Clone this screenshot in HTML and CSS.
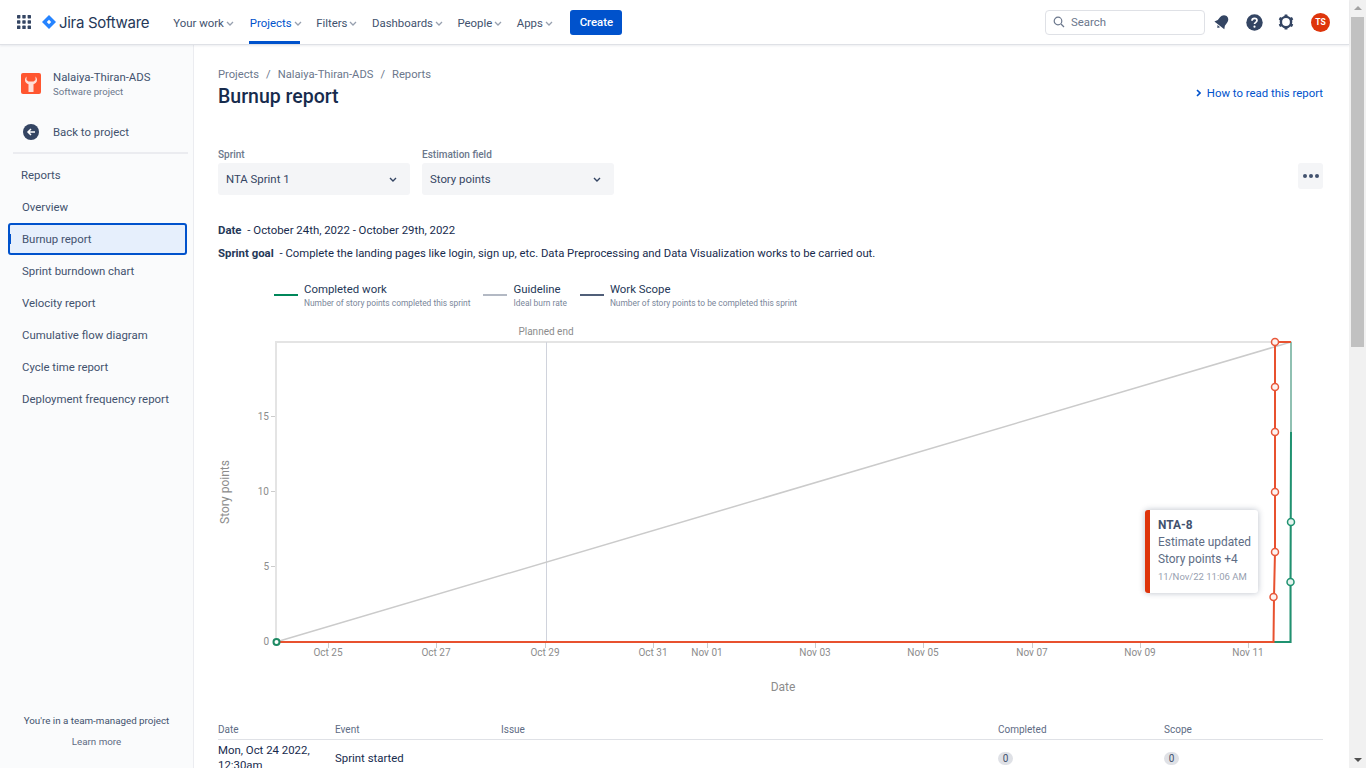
FILE: index.html
```html
<!DOCTYPE html>
<html lang="en">

<head>
    <meta charset="UTF-8">
    <meta name="viewport" content="width=device-width, initial-scale=1.0">
    <title>Burnup report</title>
    <link rel="stylesheet" href="styles.css">
</head>

<body>
    <div class="app">
        <div class="page">
            <header class="topbar">
                <svg class="apps" width="14" height="14" viewBox="0 0 14 14">
                    <g fill="#344563">
                        <rect x="0" y="0" width="3.4" height="3.4" rx=".6" /><rect x="5.3" y="0" width="3.4" height="3.4" rx=".6" /><rect x="10.6" y="0" width="3.4" height="3.4" rx=".6" />
                        <rect x="0" y="5.3" width="3.4" height="3.4" rx=".6" /><rect x="5.3" y="5.3" width="3.4" height="3.4" rx=".6" /><rect x="10.6" y="5.3" width="3.4" height="3.4" rx=".6" />
                        <rect x="0" y="10.6" width="3.4" height="3.4" rx=".6" /><rect x="5.3" y="10.6" width="3.4" height="3.4" rx=".6" /><rect x="10.6" y="10.6" width="3.4" height="3.4" rx=".6" />
                    </g>
                </svg>
                <div class="logo">
                    <svg width="14" height="14" viewBox="0 0 14 14">
                        <path d="M7 0 14 7 7 14 0 7Z" fill="#2684ff" />
                        <path d="M7 4.8 9.2 7 7 9.2 4.8 7Z" fill="#fff" />
                    </svg>
                    <span>Jira Software</span>
                </div>
                <nav class="nav">
                    <a class="nav-item" href="#">Your work <svg class="caret" viewBox="0 0 8 5"><path d="M1 1l3 3 3-3" /></svg></a>
                    <a class="nav-item active" href="#">Projects <svg class="caret" viewBox="0 0 8 5"><path d="M1 1l3 3 3-3" /></svg></a>
                    <a class="nav-item" href="#">Filters <svg class="caret" viewBox="0 0 8 5"><path d="M1 1l3 3 3-3" /></svg></a>
                    <a class="nav-item" href="#">Dashboards <svg class="caret" viewBox="0 0 8 5"><path d="M1 1l3 3 3-3" /></svg></a>
                    <a class="nav-item" href="#">People <svg class="caret" viewBox="0 0 8 5"><path d="M1 1l3 3 3-3" /></svg></a>
                    <a class="nav-item" href="#">Apps <svg class="caret" viewBox="0 0 8 5"><path d="M1 1l3 3 3-3" /></svg></a>
                </nav>
                <a class="create" href="#">Create</a>
                <div class="search">
                    <svg width="12" height="12" viewBox="0 0 12 12" fill="none" stroke="#6b778c" stroke-width="1.2">
                        <circle cx="5" cy="5" r="3.8" />
                        <path d="M8 8l3 3" />
                    </svg>
                    <span>Search</span>
                </div>
                <div class="top-icons">
                    <svg width="16" height="16" viewBox="0 0 16 16">
                        <g fill="#344563" transform="rotate(38 8 8)">
                            <path d="M8 .5C5.200.5 3.500 2.800 3.500 5.500v3.600L1.700 12.300h12.600l-1.800-3.200V5.500C12.500 2.800 10.800.5 8 .5z" />
                            <path d="M6.300 13.200h3.400L8 15.500z" />
                        </g>
                    </svg>
                    <svg width="17" height="17" viewBox="0 0 17 17">
                        <circle cx="8.500" cy="8.500" r="8.200" fill="#344563" />
                        <path d="M6 6.700c0-1.500 1.100-2.400 2.500-2.400s2.500.9 2.500 2.200c0 1.900-2.500 1.800-2.500 3.600" fill="none" stroke="#fff" stroke-width="1.700" />
                        <circle cx="8.500" cy="12.700" r="1.100" fill="#fff" />
                    </svg>
                    <svg width="16" height="16" viewBox="0 0 16 16">
                        <circle cx="8" cy="8" r="5.100" fill="none" stroke="#344563" stroke-width="2.400" />
                        <g fill="#344563">
                            <rect x="6.500" y="0.400" width="3" height="2.600" rx=".5" />
                            <rect x="6.500" y="13" width="3" height="2.600" rx=".5" />
                            <rect x="6.500" y="0.400" width="3" height="2.600" rx=".5" transform="rotate(60 8 8)" />
                            <rect x="6.500" y="0.400" width="3" height="2.600" rx=".5" transform="rotate(120 8 8)" />
                            <rect x="6.500" y="0.400" width="3" height="2.600" rx=".5" transform="rotate(240 8 8)" />
                            <rect x="6.500" y="0.400" width="3" height="2.600" rx=".5" transform="rotate(300 8 8)" />
                        </g>
                    </svg>
                    <span class="avatar">TS</span>
                </div>
            </header>

            <div class="layout">
                <aside class="sidebar">
                    <div class="project">
                        <svg class="project-icon" width="20" height="21" viewBox="0 0 20 21">
                            <rect width="20" height="21" rx="2" fill="#ff5630" />
                            <path d="M5.500 3.500C4.500 4.500 4 5.800 4 7c0 2 1.200 3.400 3.500 4.200V19h5v-7.800C14.800 10.400 16 9 16 7c0-1.200-.5-2.500-1.500-3.500V7l-2 1.500h-5L5.500 7z" fill="#fff" opacity=".82" />
                        </svg>
                        <div>
                            <div class="project-name">Nalaiya-Thiran-ADS</div>
                            <div class="project-type">Software project</div>
                        </div>
                    </div>
                    <a class="back" href="#">
                        <svg width="16" height="16" viewBox="0 0 16 16">
                            <circle cx="8" cy="8" r="8" fill="#344563" />
                            <path d="M12 8H5M8 5 5 8l3 3" fill="none" stroke="#fff" stroke-width="1.500" />
                        </svg>
                        Back to project
                    </a>
                    <div class="side-title">Reports</div>
                    <ul class="side-list">
                        <li>Overview</li>
                        <li class="current">Burnup report</li>
                        <li>Sprint burndown chart</li>
                        <li>Velocity report</li>
                        <li>Cumulative flow diagram</li>
                        <li>Cycle time report</li>
                        <li>Deployment frequency report</li>
                    </ul>
                    <div class="side-foot">
                        <p>You're in a team-managed project</p>
                        <p>Learn more</p>
                    </div>
                </aside>

                <main class="main">
                    <div class="crumbs">
                        <span>Projects</span><i>/</i><span>Nalaiya-Thiran-ADS</span><i>/</i><span>Reports</span>
                    </div>
                    <div class="head-row">
                        <h1>Burnup report</h1>
                        <a class="howto" href="#">
                            <svg width="5" height="8" viewBox="0 0 5 8"><path d="M1 1l3 3-3 3" fill="none" stroke="#0052cc" stroke-width="1.600" /></svg>
                            How to read this report
                        </a>
                    </div>

                    <div class="filters">
                        <div class="field">
                            <label>Sprint</label>
                            <div class="select">NTA Sprint 1 <svg viewBox="0 0 8 5"><path d="M1 1l3 3 3-3" /></svg></div>
                        </div>
                        <div class="field">
                            <label>Estimation field</label>
                            <div class="select">Story points <svg viewBox="0 0 8 5"><path d="M1 1l3 3 3-3" /></svg></div>
                        </div>
                        <button class="more"><b></b><b></b><b></b></button>
                    </div>

                    <p class="info date"><strong>Date</strong> - October 24th, 2022 - October 29th, 2022</p>
                    <p class="info goal"><strong>Sprint goal</strong> - Complete the landing pages like login, sign up, etc. Data Preprocessing and Data Visualization works to be carried out.</p>

                    <div class="legend">
                        <div class="legend-item">
                            <span class="swatch green"></span>
                            <div><div class="legend-name">Completed work</div><div class="legend-desc">Number of story points completed this sprint</div></div>
                        </div>
                        <div class="legend-item">
                            <span class="swatch grey"></span>
                            <div><div class="legend-name">Guideline</div><div class="legend-desc">Ideal burn rate</div></div>
                        </div>
                        <div class="legend-item">
                            <span class="swatch navy"></span>
                            <div><div class="legend-name">Work Scope</div><div class="legend-desc">Number of story points to be completed this sprint</div></div>
                        </div>
                    </div>

                    <div class="chart">
                        <svg class="plot" width="1105" height="385" viewBox="218 322 1105 385">
                            <rect x="276" y="342" width="1015" height="300" fill="none" stroke="#e4e4e4" stroke-width="2" />
                            <path d="M546.500 342V642" stroke="#d0d3dc" fill="none" />
                            <text class="axis" x="546" y="335" text-anchor="middle">Planned end</text>

                            <g stroke="#ccc" fill="none">
                                <path d="M271 416.500h4M271 491.500h4M271 566.500h4" />
                                <path d="M328.500 643v5M436.500 643v5M545.500 643v5M653.500 643v5M707.500 643v5M815.500 643v5M923.500 643v5M1032.500 643v5M1140.500 643v5M1248.500 643v5" />
                            </g>
                            <g class="axis" text-anchor="end">
                                <text x="269" y="645">0</text>
                                <text x="269" y="570">5</text>
                                <text x="269" y="495">10</text>
                                <text x="269" y="420">15</text>
                            </g>
                            <g class="axis" text-anchor="middle">
                                <text x="328" y="656">Oct 25</text>
                                <text x="436" y="656">Oct 27</text>
                                <text x="545" y="656">Oct 29</text>
                                <text x="653" y="656">Oct 31</text>
                                <text x="707" y="656">Nov 01</text>
                                <text x="815" y="656">Nov 03</text>
                                <text x="923" y="656">Nov 05</text>
                                <text x="1032" y="656">Nov 07</text>
                                <text x="1140" y="656">Nov 09</text>
                                <text x="1248" y="656">Nov 11</text>
                            </g>
                            <text class="axis title" x="783" y="691" text-anchor="middle">Date</text>
                            <text class="axis title" x="229" y="492" text-anchor="middle" transform="rotate(-90 229 492)">Story points</text>

                            <path d="M276 642 1291 342" stroke="#cbcbcb" stroke-width="1.500" fill="none" />
                            <path d="M1291 342V432" stroke="#3d9d80" stroke-width="1" fill="none" />
                            <path d="M1273 642H1290.500V582L1291 432" stroke="#1f9270" stroke-width="2" fill="none" />
                            <path d="M276 642H1273.500L1274 597 1275 552V342H1291" stroke="#e8512f" stroke-width="2" fill="none" />

                            <g fill="#fdf3f0" stroke="#e8583a" stroke-width="1.500">
                                <circle cx="1273.500" cy="597" r="3.500" />
                                <circle cx="1275" cy="552" r="3.500" />
                                <circle cx="1275" cy="492" r="3.500" />
                                <circle cx="1275" cy="432" r="3.500" />
                                <circle cx="1275" cy="387" r="3.500" />
                                <circle cx="1275" cy="342" r="3.500" />
                            </g>
                            <g fill="#e6f4ef" stroke="#1f9270" stroke-width="1.500">
                                <circle cx="1290.500" cy="582" r="3.500" />
                                <circle cx="1291" cy="522" r="3.500" />
                            </g>
                            <circle cx="276.500" cy="642" r="3" fill="#fff" stroke="#1f8a64" stroke-width="2" />
                        </svg>
                        <div class="tip">
                            <div class="tip-key">NTA-8</div>
                            <div>Estimate updated</div>
                            <div>Story points +4</div>
                            <div class="tip-time">11/Nov/22 11:06 AM</div>
                        </div>
                    </div>

                    <div class="table">
                        <div class="row thead">
                            <span class="c-date">Date</span><span class="c-event">Event</span><span class="c-issue">Issue</span><span class="c-done">Completed</span><span>Scope</span>
                        </div>
                        <div class="row">
                            <span class="c-date">Mon, Oct 24 2022, 12:30am</span><span class="c-event">Sprint started</span><span class="c-issue"></span><span class="c-done"><em>0</em></span><span><em>0</em></span>
                        </div>
                    </div>
                </main>
            </div>
        </div>

        <div class="scrollbar">
            <div class="arrow up"></div>
            <div class="thumb"></div>
            <div class="arrow down"></div>
        </div>
    </div>
</body>

</html>
```

FILE: styles.css
```css
* {
    box-sizing: border-box;
    padding: 0;
    margin: 0;
    list-style: none;
}

a {
    text-decoration: none;
    color: inherit;
}

body {
    font-family: "Roboto", "Liberation Sans", sans-serif;
    font-size: 11.4px;
    color: #172b4d;
    background: #fff;
}

.app {
    display: flex;
    height: 768px;
    overflow: hidden;
}

.page {
    flex: 1;
    min-width: 0;
    display: flex;
    flex-direction: column;
}

/* top bar */
.topbar {
    position: relative;
    z-index: 2;
    flex: none;
    display: flex;
    align-items: center;
    height: 45px;
    padding-left: 17px;
    background: #fff;
    border-bottom: 1px solid #dfe1e6;
    box-shadow: 0 1px 2px rgba(9, 30, 66, .08);
}

.logo {
    display: flex;
    align-items: center;
    gap: 3px;
    margin-left: 11px;
    font-family: "Inter", "Roboto", sans-serif;
    font-size: 15px;
    letter-spacing: -.3px;
    color: #253858;
}

.nav {
    display: flex;
    align-self: stretch;
    margin-left: 20px;
}

.nav-item {
    position: relative;
    display: flex;
    align-items: center;
    gap: 2px;
    padding: 2px 4px 0;
    margin-right: 6.5px;
    color: #42526e;
}

.nav-item:first-child {
    margin-right: 8px;
}

.nav-item.active {
    color: #0052cc;
}

.nav-item.active::after {
    content: "";
    position: absolute;
    left: 3px;
    right: 6px;
    bottom: 0;
    height: 3px;
    background: #0052cc;
}

.caret {
    width: 8px;
    height: 5px;
    fill: none;
    stroke: #97a0af;
    stroke-width: 1.300;
}

.create {
    display: flex;
    align-items: center;
    justify-content: center;
    width: 52px;
    height: 25px;
    margin-left: 7px;
    border-radius: 3px;
    background: #0052cc;
    color: #fff;
    font-weight: 500;
}

.search {
    display: flex;
    align-items: center;
    gap: 6px;
    width: 160px;
    height: 25px;
    margin-left: auto;
    padding-left: 7px;
    border: 1px solid #dfe1e6;
    border-radius: 4px;
    color: #6b778c;
}

.top-icons {
    display: flex;
    align-items: center;
    gap: 15.500px;
    width: 144px;
    padding-left: 9px;
}

.avatar {
    display: flex;
    align-items: center;
    justify-content: center;
    width: 19px;
    height: 19px;
    margin-left: 1.500px;
    border-radius: 50%;
    background: #de350b;
    color: #fff;
    font-size: 8.500px;
    font-weight: 700;
}

/* sidebar */
.layout {
    flex: 1;
    min-height: 0;
    display: flex;
}

.sidebar {
    flex: none;
    display: flex;
    flex-direction: column;
    width: 194px;
    padding: 0 6px 0 8px;
    background: #fafbfc;
    border-right: 1px solid #ebecf0;
    color: #42526e;
}

.project {
    display: flex;
    align-items: center;
    gap: 12px;
    height: 32px;
    margin: 22px 0 0 13px;
}

.project-name {
    color: #42526e;
    line-height: 15px;
}

.project-type {
    margin-top: 1px;
    font-size: 9.600px;
    color: #6b778c;
}

.back {
    display: flex;
    align-items: center;
    gap: 14px;
    height: 22px;
    margin: 22px 0 0 15px;
}

.side-title {
    position: relative;
    height: 39px;
    margin: 9px 0 0 5px;
    padding: 16px 0 0 8px;
    color: #42526e;
}

.side-title::before {
    content: "";
    position: absolute;
    top: 0;
    left: 0;
    right: -1px;
    border-top: 2px solid #ebecf0;
}

.side-list li {
    height: 32px;
    line-height: 32px;
    padding-left: 14px;
}

.side-list .current {
    position: relative;
    line-height: 28px;
    background: #e6effc;
    border: 2px solid #0052cc;
    border-radius: 3px;
    padding-left: 12px;
}

.side-list .current::before {
    content: "";
    position: absolute;
    left: -2px;
    top: 9px;
    width: 3px;
    height: 10px;
    background: #0052cc;
}

.side-foot {
    margin-top: auto;
    padding: 0 2px 21px 0;
    text-align: center;
    font-size: 9.800px;
    color: #42526e;
}

.side-foot p:last-child {
    margin-top: 10px;
    color: #5e6c84;
}

/* report */
.main {
    flex: 1;
    min-width: 0;
    padding: 23px 26px 0 24px;
    overflow: hidden;
}

.crumbs {
    display: flex;
    gap: 7px;
    font-size: 11.200px;
    line-height: 14px;
    color: #6b778c;
}

.crumbs i {
    font-style: normal;
    color: #6b778c;
}

.head-row {
    display: flex;
    justify-content: space-between;
    margin-top: 3px;
}

h1 {
    font-size: 19.500px;
    font-weight: 500;
    line-height: 24px;
    color: #172b4d;
}

.howto {
    display: flex;
    align-items: center;
    align-self: flex-start;
    gap: 6px;
    line-height: 16px;
    color: #0052cc;
}

.filters {
    display: flex;
    align-items: flex-end;
    gap: 12px;
    margin-top: 39px;
}

.field label {
    display: block;
    margin-bottom: 2px;
    font-size: 10px;
    font-weight: 500;
    line-height: 13px;
    color: #6b778c;
}

.select {
    display: flex;
    align-items: center;
    justify-content: space-between;
    width: 192px;
    height: 32px;
    padding: 0 13px 0 8px;
    background: #f4f5f7;
    border-radius: 3px;
    color: #344563;
}

.select svg {
    width: 8px;
    height: 5px;
    fill: none;
    stroke: #344563;
    stroke-width: 1.400;
}

.more {
    display: flex;
    align-items: center;
    justify-content: center;
    gap: 2px;
    width: 25px;
    height: 26px;
    margin: 0 0 6px auto;
    border: 0;
    border-radius: 3px;
    background: #f4f5f7;
}

.more b {
    width: 4px;
    height: 4px;
    border-radius: 50%;
    background: #42526e;
}

.info {
    line-height: 16px;
    color: #172b4d;
}

.date {
    margin-top: 27px;
}

.goal {
    margin-top: 7px;
    font-size: 11.300px;
}

.info strong {
    margin-right: 3px;
    font-size: 11.400px;
    font-weight: 700;
    color: #253858;
}

.legend {
    display: flex;
    margin: 20px 0 0 56px;
}

.legend-item {
    display: flex;
    gap: 6px;
    margin-right: 13px;
}

.swatch {
    flex: none;
    width: 24px;
    height: 2px;
    margin-top: 12px;
}

.green {
    background: #00875a;
}

.grey {
    background: #b3b9c4;
}

.navy {
    background: #505f79;
}

.legend-name {
    line-height: 14px;
    color: #253858;
}

.legend-desc {
    margin-top: 2px;
    font-size: 8.400px;
    line-height: 11px;
    color: #7a869a;
}

.chart {
    position: relative;
    height: 385px;
    margin-top: 13px;
}

.plot {
    display: block;
}

.axis {
    font-size: 10px;
    fill: #8c8c8c;
}

.axis.title {
    font-size: 12px;
}

.tip {
    position: absolute;
    left: 927px;
    top: 188px;
    width: 113px;
    height: 83px;
    padding: 7px 0 0 8px;
    background: #fff;
    border-left: 5px solid #de350b;
    border-radius: 3px;
    box-shadow: 0 0 6px rgba(9, 30, 66, .28);
    font-size: 11.900px;
    line-height: 17px;
    color: #5e6c84;
}

.tip-key {
    font-weight: 700;
    color: #42526e;
}

.tip-time {
    font-size: 9.500px;
    color: #97a0af;
}

.table {
    margin-top: 12px;
}

.row {
    display: flex;
    align-items: center;
    color: #172b4d;
}

.thead {
    height: 21px;
    font-size: 10px;
    color: #5e6c84;
    border-bottom: 1px solid #dfe1e6;
}

.c-date {
    width: 117px;
    line-height: 15px;
}

.c-event {
    width: 166px;
}

.c-issue {
    width: 497px;
}

.c-done {
    width: 166px;
}

.row em {
    display: inline-block;
    width: 15px;
    height: 13px;
    border-radius: 7px;
    background: #dfe1e6;
    font-style: normal;
    font-size: 10px;
    line-height: 13px;
    text-align: center;
    color: #42526e;
}

.row:not(.thead) {
    margin-top: 3px;
}

/* fake scrollbar */
.scrollbar {
    flex: none;
    display: flex;
    flex-direction: column;
    width: 17px;
    background: #f1f1f1;
}

.arrow {
    flex: none;
    position: relative;
    height: 17px;
}

.arrow::after {
    content: "";
    position: absolute;
    left: 5px;
    border-left: 4px solid transparent;
    border-right: 4px solid transparent;
}

.up::after {
    top: 6px;
    border-bottom: 4px solid #a3a3a3;
}

.down {
    margin-top: auto;
}

.down::after {
    top: 7px;
    border-top: 4px solid #505050;
}

.thumb {
    height: 330px;
    margin: 0 2px;
    background: #c1c1c1;
}
```
